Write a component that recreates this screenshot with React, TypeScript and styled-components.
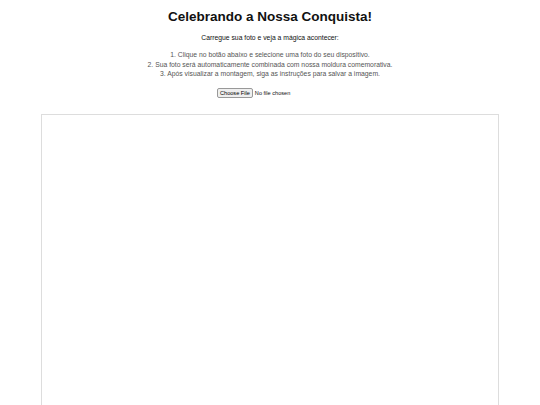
import styled, { createGlobalStyle } from "styled-components";

const GlobalStyle = createGlobalStyle`
    html, body {
        margin: 0;
        padding: 0;
        background-color: #fff;
        font-family: "Liberation Sans", Arial, sans-serif;
        color: #111;
    }
`;

const Page = styled.div`
    display: flex;
    flex-direction: column;
    align-items: center;
    padding-top: 8px;
`;

const Title = styled.h1`
    margin: 0;
    font-size: 13.5px;
    font-weight: 700;
    line-height: 17px;
`;

const Subtitle = styled.p`
    margin: 8px 0 0;
    font-size: 6.8px;
    line-height: 9px;
`;

const Steps = styled.div`
    margin-top: 8px;
    text-align: center;
    font-size: 6.8px;
    line-height: 9.6px;
    color: #555;
`;

const FileInput = styled.input`
    margin-top: 9px;
    font-family: "Liberation Sans", Arial, sans-serif;
    font-size: 5.6px;

    &::file-selector-button {
        font-family: "Liberation Sans", Arial, sans-serif;
        font-size: 5.6px;
        padding: 1px 2px;
        margin-right: 2px;
        border: 1px solid #999;
        border-radius: 2px;
        background-color: #efefef;
    }
`;

const Canvas = styled.div`
    margin-top: 16px;
    width: 456px;
    height: 400px;
    border: 1px solid #ddd;
    background-color: #fff;
`;

function App() {
    return (
        <>
            <GlobalStyle />
            <Page>
                <Title>Celebrando a Nossa Conquista!</Title>
                <Subtitle>Carregue sua foto e veja a mágica acontecer:</Subtitle>
                <Steps>
                    <div>1. Clique no botão abaixo e selecione uma foto do seu dispositivo.</div>
                    <div>2. Sua foto será automaticamente combinada com nossa moldura comemorativa.</div>
                    <div>3. Após visualizar a montagem, siga as instruções para salvar a imagem.</div>
                </Steps>
                <FileInput type="file" accept="image/*" />
                <Canvas />
            </Page>
        </>
    );
}

export default App;
